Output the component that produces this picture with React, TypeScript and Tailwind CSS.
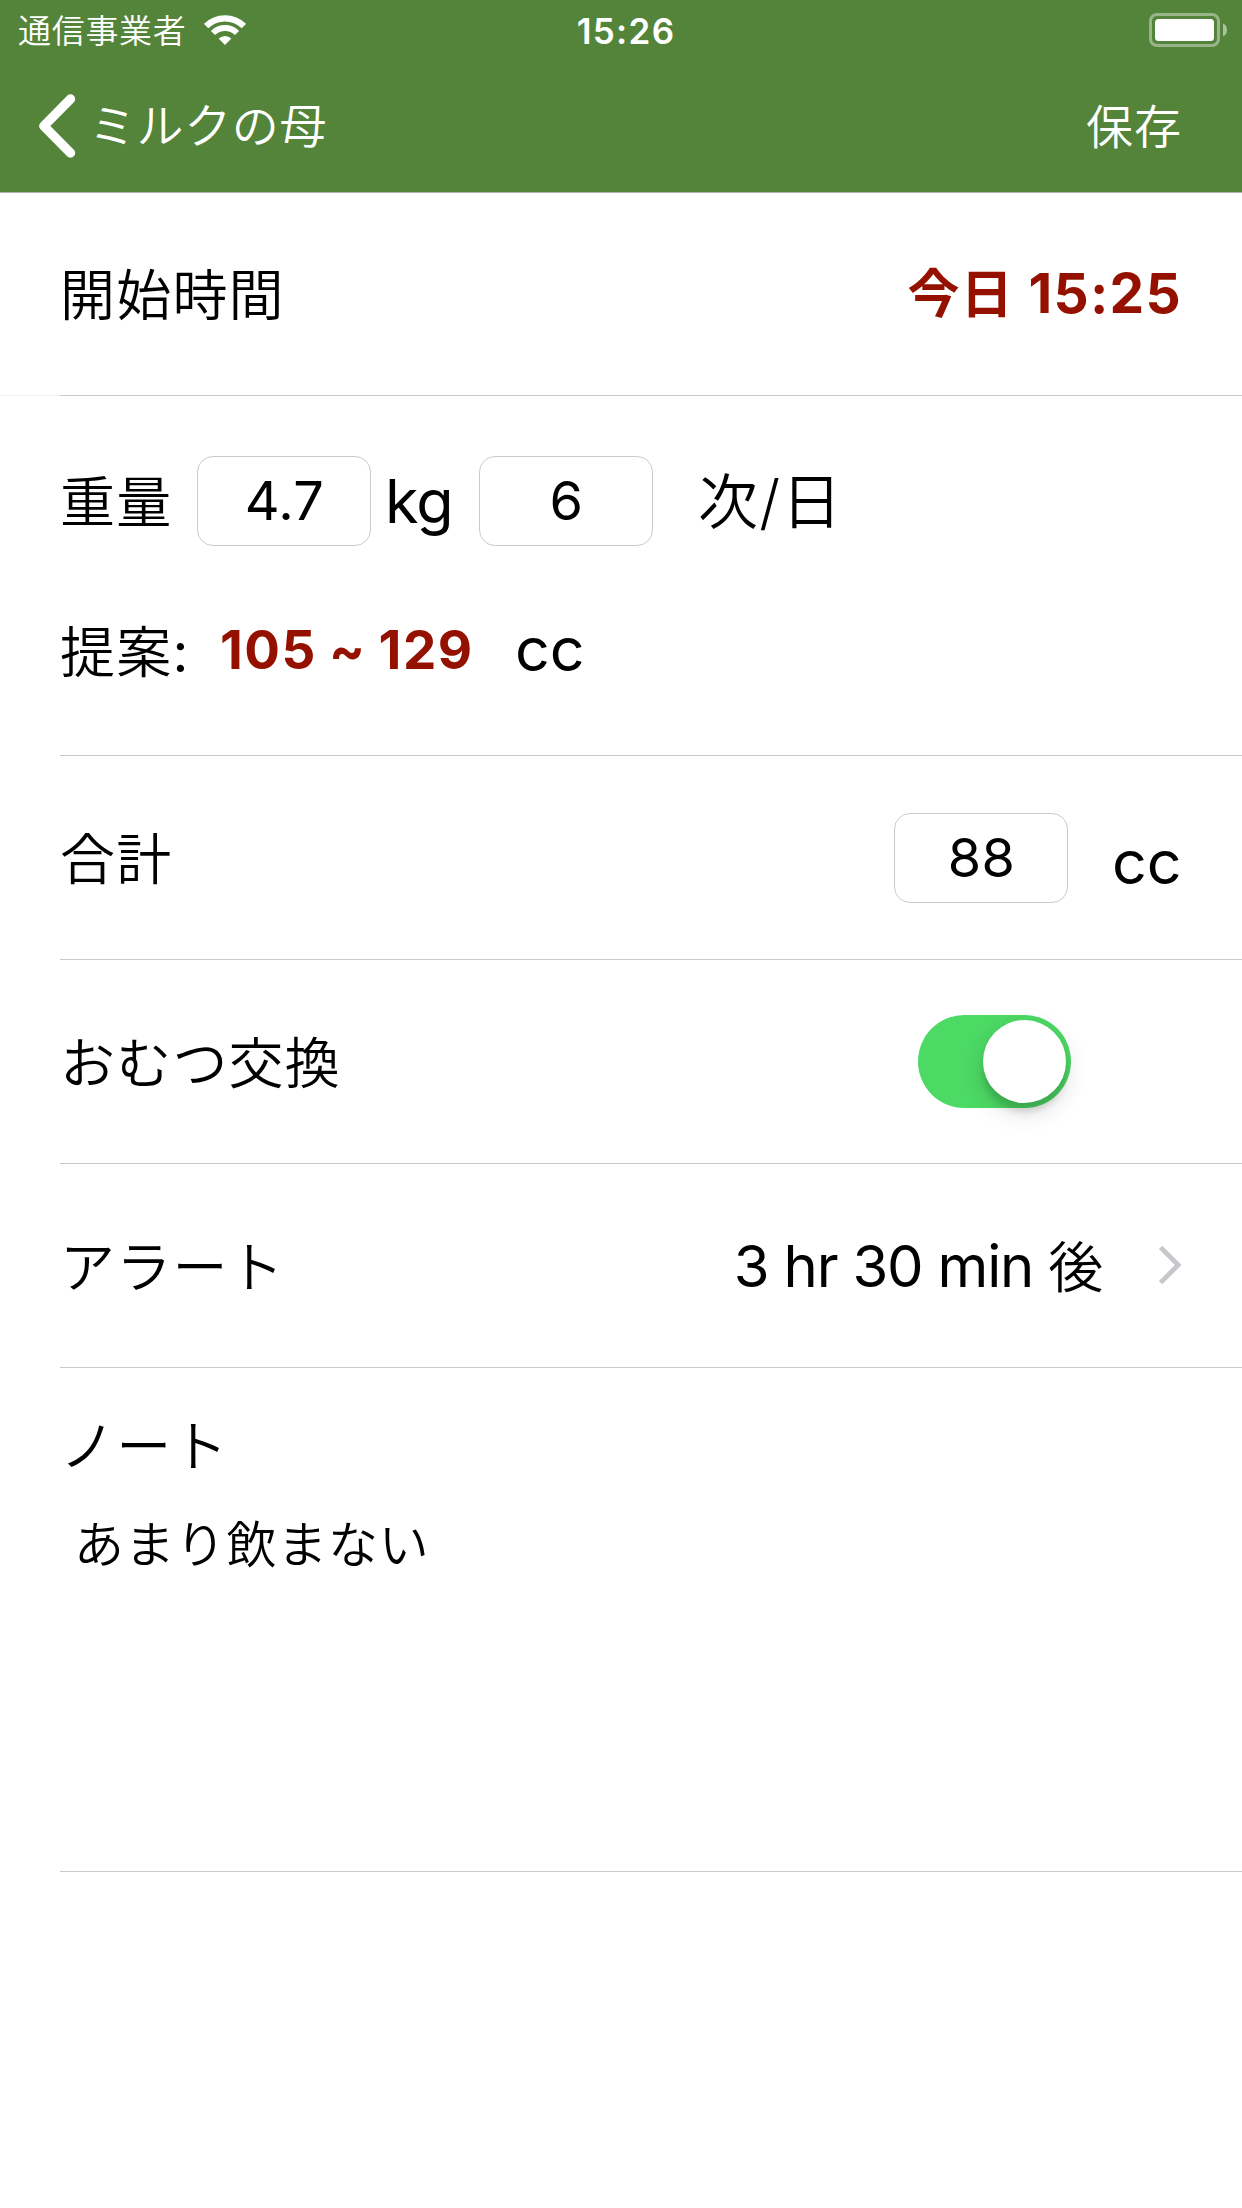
import React, { useState } from 'react';

const WifiIcon: React.FC<{ className?: string }> = ({ className }) => (
  <svg viewBox="0 0 42 30" className={className} fill="none" aria-hidden="true">
    <path d="M2.1 11.1a26.75 26.75 0 0 1 37.8 0" stroke="white" strokeWidth="6.2" />
    <path d="M9 18a17 17 0 0 1 24 0" stroke="white" strokeWidth="6" />
    <path d="M21 30l-6.4-6.4a9 9 0 0 1 12.8 0z" fill="white" />
  </svg>
);

const BatteryIcon: React.FC<{ className?: string }> = ({ className }) => (
  <svg viewBox="0 0 78 34" className={className} fill="none" aria-hidden="true">
    <rect x="1.5" y="1.5" width="68" height="31" rx="6.5" stroke="white" strokeOpacity="0.4" strokeWidth="3" />
    <rect x="6" y="6" width="59" height="22" rx="3.5" fill="white" />
    <path d="M74 10.5c2.6 1 4 3.6 4 6.5s-1.4 5.5-4 6.5z" fill="white" fillOpacity="0.5" />
  </svg>
);

const BackIcon: React.FC<{ className?: string }> = ({ className }) => (
  <svg viewBox="0 0 38 64" className={className} fill="none" aria-hidden="true">
    <path d="M32.5 5L5.8 32l26.7 27" stroke="white" strokeWidth="9.4" strokeLinecap="round" strokeLinejoin="round" />
  </svg>
);

const DisclosureIcon: React.FC<{ className?: string }> = ({ className }) => (
  <svg viewBox="0 0 24 40" className={className} fill="none" aria-hidden="true">
    <path d="M2.6 2.4L20.2 20 2.6 37.6" stroke="#c7c7cc" strokeWidth="4.8" />
  </svg>
);

const Label: React.FC<{ children: React.ReactNode; className?: string }> = ({ children, className }) => (
  <span className={`pt-[3px] text-[55px] leading-none tracking-[1.2px] font-[350] whitespace-nowrap ${className ?? ''}`}>{children}</span>
);

const NumberField: React.FC<{ label: string; initial: string; className?: string }> = ({ label, initial, className }) => {
  const [value, setValue] = useState(initial);
  return (
    <input
      aria-label={label}
      value={value}
      onChange={(e) => setValue(e.target.value)}
      className={`w-[174px] h-[90px] shrink-0 rounded-[16px] border border-[#cccccc] bg-white pb-px pl-px text-center text-[54px] tracking-[0.3px] focus:outline-none ${className ?? ''}`}
    />
  );
};

const Row: React.FC<{ children: React.ReactNode; className?: string }> = ({ children, className }) => (
  <div className={`ml-[60px] border-b border-[#c8c7cc] pr-[62px] ${className ?? ''}`}>{children}</div>
);

const App: React.FC = () => {
  const [diaper, setDiaper] = useState(true);

  return (
    <div className="w-[1242px] h-[2208px] bg-white text-black overflow-hidden font-['Inter','Noto_Sans_CJK_JP',sans-serif]">
      {/* Status bar + navigation */}
      <header className="h-[193px] bg-[#538439] border-b border-[#b2b2b2] text-white">
        <div className="grid h-[60px] grid-cols-3 items-center pl-[18px] pr-[15px]">
          <div className="flex items-center">
            <span className="pt-[2px] text-[33px] leading-none tracking-[0.7px] font-[350]">通信事業者</span>
            <WifiIcon className="ml-[17px] h-[30px] w-[42px]" />
          </div>
          <span className="pt-[3px] pl-[7px] text-center text-[35px] leading-none tracking-[1.3px] font-semibold">15:26</span>
          <BatteryIcon className="h-[34px] w-[78px] justify-self-end" />
        </div>
        <nav className="flex h-[132px] items-center justify-between pl-[38px] pr-[60px]">
          <button className="flex items-center">
            <BackIcon className="h-[64px] w-[38px]" />
            <span className="ml-[13px] pb-px text-[47px] leading-none tracking-[0.6px] font-[350]">ミルクの母</span>
          </button>
          <button className="text-[47px] leading-none tracking-[1px] font-[350]">保存</button>
        </nav>
      </header>

      <main>
        {/* Start time */}
        <div className="flex border-b border-[#c8c7cc]">
          <div className="-mb-px w-[60px] border-b border-[#f2f2f2]" />
          <div className="flex h-[202px] flex-1 items-center justify-between pr-[60px]">
            <Label>開始時間</Label>
            <span className="pb-[2px] text-[55px] leading-none tracking-[1.3px] font-bold text-[#941100] whitespace-nowrap">
              <span className="text-[52px]">今日</span> 15:25
            </span>
          </div>
        </div>

        {/* Weight and suggested amount */}
        <Row className="h-[360px] pt-[60px]">
          <div className="flex h-[90px] items-center">
            <Label className="w-[137px]">重量</Label>
            <NumberField label="重量" initial="4.7" />
            <span className="ml-[14px] w-[94px] text-[61px] leading-none tracking-[-0.8px]">kg</span>
            <NumberField label="次/日" initial="6" />
            <span className="ml-[45px] pt-px text-[60px] leading-none tracking-[1.3px] font-[350]">次/日</span>
          </div>
          <div className="flex mt-[59px] h-[90px] items-center">
            <Label className="w-[160px] pt-[5px]">
              提案<span className="font-normal">:</span>
            </Label>
            <span className="w-[295px] text-[53px] leading-none tracking-[1.5px] [word-spacing:-2px] font-bold text-[#941100] whitespace-nowrap">105 ~ 129</span>
            <span className="pb-px text-[61px] leading-none">cc</span>
          </div>
        </Row>

        {/* Total */}
        <Row className="flex h-[204px] items-center">
          <Label className="flex-1">合計</Label>
          <NumberField label="合計" initial="88" />
          <span className="ml-[44px] w-[68px] pt-[9px] text-[61px] leading-none">cc</span>
        </Row>

        {/* Diaper change */}
        <Row className="flex h-[204px] items-center justify-between">
          <Label>おむつ交換</Label>
          <button
            role="switch"
            aria-checked={diaper}
            aria-label="おむつ交換"
            onClick={() => setDiaper(!diaper)}
            className={`mr-[109px] flex h-[93px] w-[153px] items-center rounded-full p-[5px] ${diaper ? 'justify-end bg-[#4cd964]' : 'justify-start bg-[#e5e5ea]'}`}
          >
            <span className="size-[83px] rounded-full bg-white shadow-[0_9px_24px_rgba(0,0,0,0.15),0_9px_6px_rgba(0,0,0,0.12)]" />
          </button>
        </Row>

        {/* Alert */}
        <Row className="flex h-[204px] items-center">
          <Label className="flex-1">アラート</Label>
          <span className="text-[58px] leading-none tracking-[-1.2px] whitespace-nowrap">
            3 hr 30 min <span className="text-[55px] font-[350]">後</span>
          </span>
          <DisclosureIcon className="-mr-[2px] mb-[2px] ml-[56px] h-[40px] w-[24px]" />
        </Row>

        {/* Note */}
        <Row className="h-[504px] pt-[48px]">
          <Label className="block">ノート</Label>
          <p className="mt-[46px] ml-[14px] text-[50px] leading-none tracking-[0.8px] font-[350]">あまり飲まない</p>
        </Row>
      </main>
    </div>
  );
};

export default App;
